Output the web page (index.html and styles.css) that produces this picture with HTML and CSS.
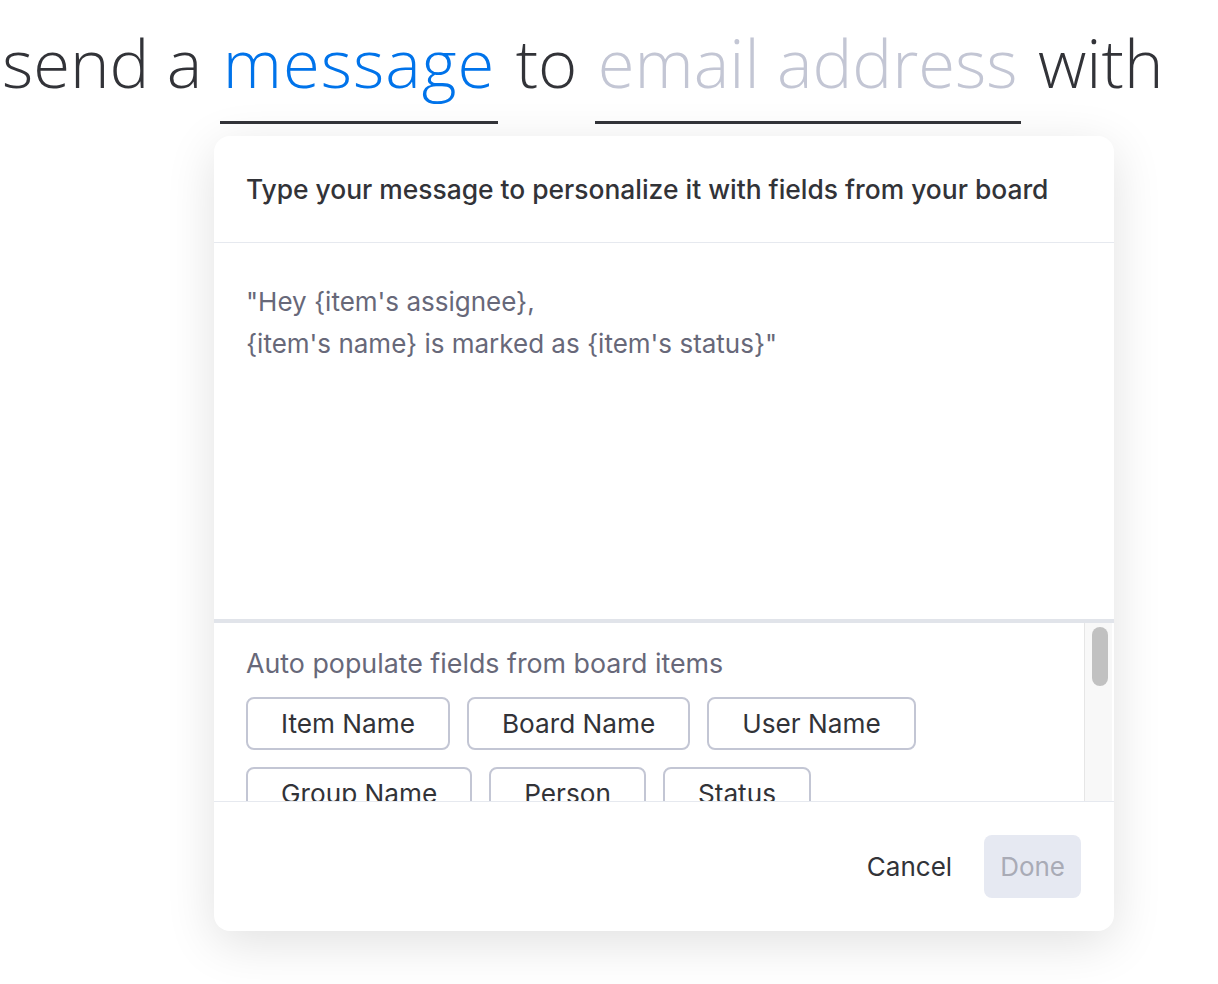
FILE: index.html
```html
<!DOCTYPE html>
<html lang="en">
  <head>
    <meta charset="UTF-8" />
    <meta name="viewport" content="width=device-width, initial-scale=1.0" />
    <title>Send a message</title>
    <link rel="stylesheet" href="styles.css">
  </head>
  <body>
    <h1 class="sentence">
      send a <span class="slot slot-filled">message</span> to
      <span class="slot slot-empty">email address</span> with
    </h1>

    <div class="editor">
      <div class="editor-header">
        Type your message to personalize it with fields from your board
      </div>

      <div class="editor-message">
        <p>"Hey {item's assignee},</p>
        <p>{item's name} is marked as {item's status}"</p>
      </div>

      <div class="fields">
        <div class="fields-body">
          <p class="fields-title">Auto populate fields from board items</p>
          <div class="chips">
            <button class="chip">Item Name</button>
            <button class="chip">Board Name</button>
            <button class="chip">User Name</button>
            <button class="chip">Group Name</button>
            <button class="chip">Person</button>
            <button class="chip">Status</button>
          </div>
        </div>
        <div class="scrollbar">
          <div class="thumb"></div>
        </div>
      </div>

      <div class="editor-footer">
        <button class="btn btn-cancel">Cancel</button>
        <button class="btn btn-done">Done</button>
      </div>
    </div>
  </body>
</html>
```

FILE: styles.css
```css
body {
  margin: 0;
  padding-bottom: 60px;
  background-color: #ffffff;
  font-family: "Inter", "Noto Sans", sans-serif;
  color: #323338;
}

p {
  margin: 0;
}

button {
  font-family: inherit;
  cursor: pointer;
}

/* sentence ----------------------------------------- */

.sentence {
  margin: 0;
  padding: 22px 0 0 2px;
  font-family: "Open Sans", sans-serif;
  font-weight: 300;
  font-size: 67px;
  line-height: 80px;
  color: #323338;
  white-space: nowrap;
}

.slot {
  display: inline-block;
  line-height: 80px;
  padding: 0 3px 19px;
  border-bottom: 3px solid #323338;
}

.slot-filled {
  color: #0073ea;
  letter-spacing: 1px;
}

.slot-empty {
  color: #c3c6d4;
}

/* editor card ------------------------------------- */

.editor {
  width: 900px;
  margin: 12px 0 0 214px;
  background-color: #ffffff;
  border-radius: 16px;
  box-shadow: 0 12px 50px rgba(0, 0, 0, 0.12);
  overflow: hidden;
}

.editor-header {
  display: flex;
  align-items: center;
  height: 106px;
  padding: 0 32px;
  border-bottom: 1px solid #e6e9ef;
  font-size: 26.4px;
  font-weight: 500;
}

.editor-message {
  height: 380px;
  box-sizing: border-box;
  padding: 38px 32px;
  border-bottom: 4px solid #e1e4ea;
  font-size: 26px;
  line-height: 42px;
  color: #676879;
}

.fields {
  display: flex;
  height: 178px;
  border-bottom: 1px solid #e6e9ef;
}

.fields-body {
  flex: 1;
  overflow: hidden;
  padding: 24px 32px 0;
}

.fields-title {
  font-size: 26.8px;
  line-height: 32px;
  color: #676879;
  margin-bottom: 18px;
}

.chips {
  display: flex;
  flex-wrap: wrap;
  gap: 17px;
  width: 700px;
}

.chip {
  height: 53px;
  padding: 0 33px;
  background-color: #ffffff;
  border: 2px solid #c3c6d4;
  border-radius: 8px;
  font-size: 26.2px;
  color: #323338;
}

.scrollbar {
  width: 27px;
  margin-right: 2px;
  background-color: #f8f8f8;
  border-left: 1px solid #e6e6e6;
  padding-top: 4px;
}

.thumb {
  width: 16px;
  height: 59px;
  margin-left: 7px;
  border-radius: 8px;
  background-color: #c1c1c1;
}

.editor-footer {
  display: flex;
  justify-content: flex-end;
  align-items: center;
  gap: 16px;
  padding: 33px;
}

.btn {
  height: 63px;
  padding: 0 16px;
  border: none;
  border-radius: 8px;
  font-size: 26px;
}

.btn-cancel {
  background: none;
  color: #323338;
}

.btn-done {
  background-color: #e6e9f2;
  color: #a9abb6;
}
```
